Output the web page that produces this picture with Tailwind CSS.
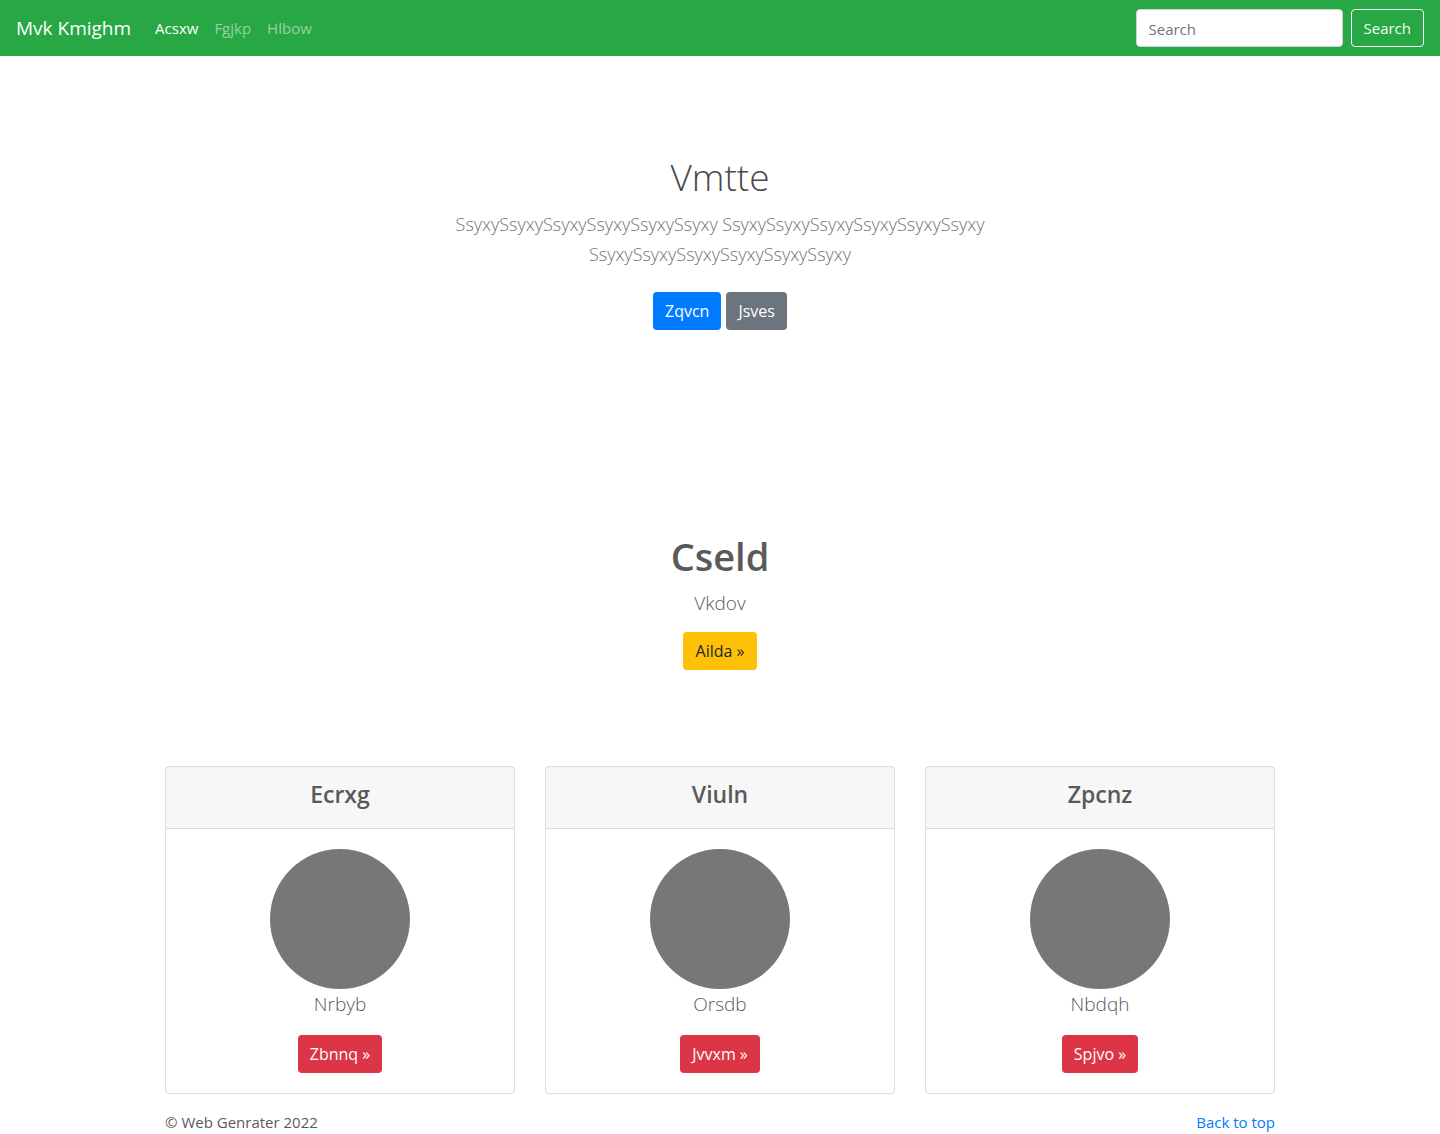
<!DOCTYPE html>
<html lang="en">
<head>
<meta charset="utf-8">
<meta name="viewport" content="width=device-width, initial-scale=1">
<title>Mvk Kmighm</title>
<script src="https://cdn.jsdelivr.net/npm/@tailwindcss/browser@4"></script>
</head>
<body class="bg-white font-['Segoe_UI','Open_Sans',sans-serif] text-base text-[#5a5a5a]">
<header>
  <nav class="flex h-14 items-center bg-[#28a745] px-4 text-[15px] leading-6">
    <a href="#" class="mr-4 text-[19px] leading-[30px] text-white">Mvk Kmighm</a>
    <ul class="flex">
      <li><a href="#" class="block p-2 text-white">Acsxw</a></li>
      <li><a href="#" class="block p-2 text-white/50">Fgjkp</a></li>
      <li><a href="#" class="block p-2 text-white/50">Hlbow</a></li>
    </ul>
    <form class="ml-auto flex gap-2">
      <input type="text" placeholder="Search" aria-label="Search" class="h-[38px] w-[207px] rounded border border-[#ced4da] bg-white px-3 pt-px placeholder:text-[#6c757d]">
      <button type="submit" class="h-[38px] rounded border border-[#f8f9fa] px-3 text-[#f8f9fa]">Search</button>
    </form>
  </nav>
</header>
<main>
  <section class="px-4 pt-[97px] pb-24 text-center">
    <h1 class="mb-2 text-[37px] leading-12 font-light text-[#4a4a4a]">Vmtte</h1>
    <p class="mx-auto mb-[23px] max-w-[600px] text-lg leading-[30px] font-light text-[#6c757d]">SsyxySsyxySsyxySsyxySsyxySsyxy SsyxySsyxySsyxySsyxySsyxySsyxy SsyxySsyxySsyxySsyxySsyxySsyxy</p>
    <div class="flex justify-center gap-[5px]">
      <a href="#" class="rounded bg-[#007bff] px-3 py-[7px] text-white">Zqvcn</a>
      <a href="#" class="rounded bg-[#6c757d] px-3 py-[7px] text-white">Jsves</a>
    </div>
  </section>
  <section class="px-4 pt-[106px] pb-24 text-center">
    <h2 class="mb-2 text-[38px] leading-12 font-semibold">Cseld</h2>
    <p class="mb-3.5 text-[19px] leading-[30px] font-light">Vkdov</p>
    <a href="#" class="inline-block rounded bg-[#ffc107] px-[13px] py-[7px] text-[#212529]">Ailda »</a>
  </section>
  <div class="mx-auto grid max-w-[1110px] grid-cols-3 gap-[30px] text-center">
    <article class="rounded border border-black/13">
      <h3 class="border-b border-black/13 bg-black/3 px-5 pt-3 pb-[19px] text-[23px] leading-[30px] font-semibold">Ecrxg</h3>
      <div class="p-5">
        <div class="mx-auto size-[140px] rounded-full bg-[#777]"></div>
        <p class="mb-4 text-[19px] leading-[30px] font-light">Nrbyb</p>
        <a href="#" class="inline-block rounded bg-[#dc3545] px-3 py-[7px] text-white">Zbnnq »</a>
      </div>
    </article>
    <article class="rounded border border-black/13">
      <h3 class="border-b border-black/13 bg-black/3 px-5 pt-3 pb-[19px] text-[23px] leading-[30px] font-semibold">Viuln</h3>
      <div class="p-5">
        <div class="mx-auto size-[140px] rounded-full bg-[#777]"></div>
        <p class="mb-4 text-[19px] leading-[30px] font-light">Orsdb</p>
        <a href="#" class="inline-block rounded bg-[#dc3545] px-3 py-[7px] text-white">Jvvxm »</a>
      </div>
    </article>
    <article class="rounded border border-black/13">
      <h3 class="border-b border-black/13 bg-black/3 px-5 pt-3 pb-[19px] text-[23px] leading-[30px] font-semibold">Zpcnz</h3>
      <div class="p-5">
        <div class="mx-auto size-[140px] rounded-full bg-[#777]"></div>
        <p class="mb-4 text-[19px] leading-[30px] font-light">Nbdqh</p>
        <a href="#" class="inline-block rounded bg-[#dc3545] px-3 py-[7px] text-white">Spjvo »</a>
      </div>
    </article>
  </div>
</main>
<footer class="mx-auto flex max-w-[1110px] justify-between pt-4 text-[15px] leading-6">
  <p>© Web Genrater 2022</p>
  <a href="#" class="text-[#007bff]">Back to top</a>
</footer>
</body>
</html>
